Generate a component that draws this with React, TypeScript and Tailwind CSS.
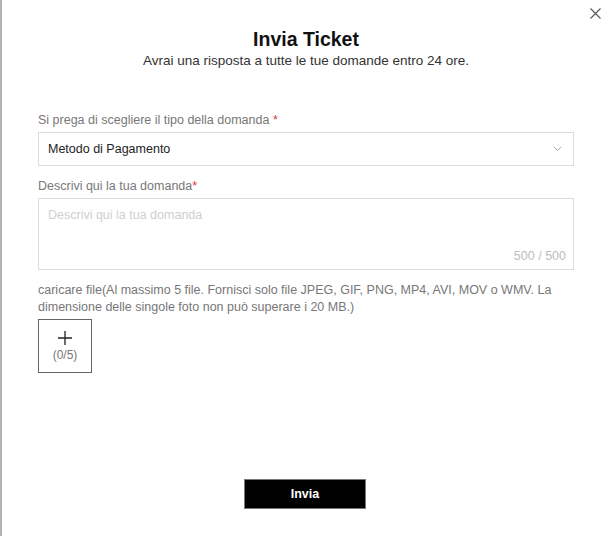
import React from "react";

export default function App() {
  return (
    <div
      className="relative w-[610px] h-[536px] bg-white overflow-hidden border-l-2 border-[#b5b5b5]"
      style={{ fontFamily: '"Liberation Sans", Arial, sans-serif' }}
    >
      <button className="absolute right-[8px] top-[6px] w-[14px] h-[14px] flex items-center justify-center">
        <svg width="11" height="11" viewBox="0 0 11 11">
          <path d="M0.5 0.5 L10.5 10.5 M10.5 0.5 L0.5 10.5" stroke="#555" strokeWidth="1.1" fill="none" />
        </svg>
      </button>

      <div className="flex flex-col items-center pt-[27px]">
        <h1 className="text-[19.5px] leading-[24px] font-bold text-[#111]">Invia Ticket</h1>
        <p className="mt-[1px] text-[13.5px] leading-[18px] text-[#333]">
          Avrai una risposta a tutte le tue domande entro 24 ore.
        </p>
      </div>

      <div className="flex flex-col px-[36px] pt-[42px] text-[12.5px]">
        <label className="leading-[16px] text-[#777]">
          Si prega di scegliere il tipo della domanda <span className="text-[#e0324b]">*</span>
        </label>
        <div className="mt-[4px] h-[34px] border border-[#dcdcdc] flex items-center justify-between pl-[9px] pr-[11px]">
          <span className="text-[#222]">Metodo di Pagamento</span>
          <svg width="9" height="6" viewBox="0 0 9 6">
            <path d="M0.8 0.8 L4.5 4.6 L8.2 0.8" stroke="#aaa" strokeWidth="1" fill="none" />
          </svg>
        </div>

        <label className="mt-[12px] leading-[16px] text-[#777]">
          Descrivi qui la tua domanda<span className="text-[#e0324b]">*</span>
        </label>
        <div className="mt-[4px] h-[72px] border border-[#dcdcdc] relative">
          <span className="absolute left-[9px] top-[8px] leading-[16px] text-[#cfcfcf]">Descrivi qui la tua domanda</span>
          <span className="absolute right-[7px] bottom-[5px] leading-[16px] text-[#bdbdbd]">500 / 500</span>
        </div>

        <p className="mt-[12px] leading-[17px] text-[#777]">
          caricare file(Al massimo 5 file. Fornisci solo file JPEG, GIF, PNG, MP4, AVI, MOV o WMV. La
          <br />
          dimensione delle singole foto non può superare i 20 MB.)
        </p>
        <div className="mt-[3px] w-[54px] h-[54px] border border-[#666] flex flex-col items-center justify-center">
          <svg width="14" height="14" viewBox="0 0 14 14">
            <path d="M7 0 V14 M0 7 H14" stroke="#222" strokeWidth="1.3" fill="none" />
          </svg>
          <span className="mt-[3px] text-[12px] leading-[14px] text-[#777]">(0/5)</span>
        </div>
      </div>

      <div className="absolute left-0 right-0 top-[479px] flex justify-center">
        <button className="w-[122px] h-[30px] bg-black border border-[#777] text-white font-bold text-[12.5px] ml-[-2px]">
          Invia
        </button>
      </div>
    </div>
  );
}
